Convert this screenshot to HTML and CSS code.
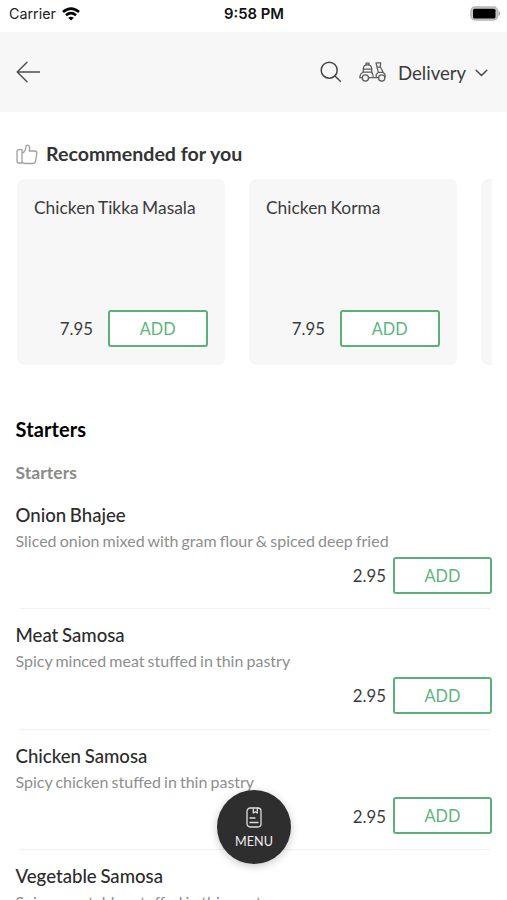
FILE: index.html
```html
<!DOCTYPE html>
<html lang="en">
<head>
<meta charset="utf-8">
<title>Menu</title>
<link rel="stylesheet" href="styles.css">
</head>
<body>
<div class="status">
  <div class="carrier"><span>Carrier</span>
    <svg width="18" height="14" viewBox="0 0 18 14" fill="none" stroke="#000" stroke-width="2.7"><path d="M1 5Q9-1.8 17 5M4 8.2Q9 4.2 14 8.2"/><path d="M9 13.6 6.2 10.8Q9 8.6 11.8 10.8Z" fill="#000" stroke="none"/></svg>
  </div>
  <div class="time">9:58 PM</div>
  <svg class="battery" width="31" height="15" viewBox="0 0 31 15"><rect x="1" y="1" width="26.5" height="13" rx="4" fill="#ccc" stroke="#b5b5b5" stroke-width="1.5"/><rect x="3" y="2.7" width="22.5" height="9.8" rx="1.5" fill="#000"/><path d="M28.5 5Q30.3 5.8 30.3 7.5T28.5 10Z" fill="#aaa"/></svg>
</div>
<header class="bar">
  <svg class="back" width="25" height="22" viewBox="0 0 25 22" fill="none" stroke="#4c4c4c" stroke-width="1.4" stroke-linecap="round" stroke-linejoin="round"><path d="M23.5 11H1.2M11 1.2 1.2 11 11 20.8"/></svg>
  <svg class="search" width="22" height="22" viewBox="0 0 22 22" fill="none" stroke="#484848" stroke-width="1.5" stroke-linecap="round"><circle cx="9.2" cy="9.2" r="8"/><path d="m15 15 5.3 5.2"/></svg>
  <svg class="scooter" width="28" height="20" viewBox="0 0 28 20" fill="none" stroke="#5c5c5c" stroke-width="1.25" stroke-linecap="round" stroke-linejoin="round"><path d="M4.3 10V6.5Q4.5 2.8 8.5 2.8T12.7 6.5V10ZM4.3 7H12.7M7 2.8V1.2H10V2.8"/><path d="M4.3 10Q.9 11.8.8 15.7H3.2M12.7 10Q14.3 12 14.2 15.7M9.6 15.7H19.4M17.2 15.5V12.6L19.3 10.3 18 5.2 17 .8H21.7L21.2 4.8 24.2 10.2Q26.5 12 26.3 14.8M18 5H21.2M19.3 10.3 24.2 10.2"/><circle cx="6.4" cy="15.9" r="3.1"/><circle cx="22.7" cy="15.9" r="3.1"/></svg>
  <span class="mode">Delivery</span>
  <svg class="chev" width="13" height="8" viewBox="0 0 13 8" fill="none" stroke="#484848" stroke-width="1.5" stroke-linecap="round" stroke-linejoin="round"><path d="m1.2 1.2 5.3 5.3 5.3-5.3"/></svg>
</header>
<main>
  <h2 class="rec"><svg width="22" height="21" viewBox="0 0 22 21" fill="none" stroke="#a0a0a0" stroke-width="1.3" stroke-linejoin="round" stroke-linecap="round"><path d="M6 5.7H2.6Q1 5.7 1 7.5V17Q1 19 2.6 19H6M6 5.7V17.8M6 9.2Q9.6 7.8 10 2.6Q10.2 1 11.7 1.2Q14.6 1.8 13.3 7H18.8Q21 7.3 20.8 9.6L19.5 17.3Q19 19.5 16.8 19.5H9.5Q6.5 19.5 6 17.5"/></svg><span>Recommended for you</span></h2>
  <div class="cards">
    <article class="card"><h3>Chicken Tikka Masala</h3><div class="buy"><span class="price">7.95</span><button>ADD</button></div></article>
    <article class="card"><h3>Chicken Korma</h3><div class="buy"><span class="price">7.95</span><button>ADD</button></div></article>
    <article class="card"></article>
  </div>
  <h1>Starters</h1>
  <h2 class="sub">Starters</h2>
  <section class="items">
    <article class="item"><h3>Onion Bhajee</h3><p>Sliced onion mixed with gram flour &amp; spiced deep fried</p><div class="buy"><span class="price">2.95</span><button>ADD</button></div></article>
    <article class="item"><h3>Meat Samosa</h3><p>Spicy minced meat stuffed in thin pastry</p><div class="buy"><span class="price">2.95</span><button>ADD</button></div></article>
    <article class="item"><h3>Chicken Samosa</h3><p>Spicy chicken stuffed in thin pastry</p><div class="buy"><span class="price">2.95</span><button>ADD</button></div></article>
    <article class="item"><h3>Vegetable Samosa</h3><p>Spicy vegetables stuffed in thin pastry</p></article>
  </section>
</main>
<div class="fab">
  <svg width="16" height="21" viewBox="0 0 16 21" fill="none" stroke="#ddd" stroke-width="1.3" stroke-linecap="round" stroke-linejoin="round"><rect x="1" y="1" width="14" height="19" rx="3.2"/><path d="M7.3 1V6L9.3 4.7 11.3 6V1M4 11H9M4 15.5H12"/></svg>
  <span>MENU</span>
</div>
</body>
</html>
```
FILE: styles.css
```css
* { box-sizing: border-box; margin: 0; }
body { width: 507px; height: 900px; overflow: hidden; background: #fff; color: #3c3c3c; font-family: Lato, sans-serif; }
svg { display: block; flex: none; }
.status { height: 32px; display: grid; grid-template-columns: 1fr auto 1fr; align-items: center; padding: 0 6px 5px 9px; font: 15px/20px Inter, sans-serif; color: #222; }
.carrier { display: flex; align-items: center; gap: 6px; font-size: 14.3px; }
.time { margin-right: 2px; font-weight: 600; color: #111; font-size: 14.8px; }
.battery { justify-self: end; }
.bar { height: 79.5px; background: #f7f7f7; display: flex; align-items: center; padding: 0 19px 0 16px; }
.search { margin-left: auto; }
.scooter { margin-left: 17px; }
.mode { margin: 2px 0 0 11px; width: 69px; font-size: 18.6px; line-height: 24px; white-space: nowrap; }
.chev { margin: 3px 0 0 8px; }
main { height: 788px; overflow: hidden; padding: 30px 15px 0; }
.rec { display: flex; align-items: center; gap: 8px; height: 26px; padding-left: 1px; font-size: 19.6px; font-weight: 700; color: #333; white-space: nowrap; }
.rec span { margin-top: -2px; }
.cards { display: flex; gap: 24.5px; margin-top: 11.5px; padding-left: 2px; overflow: hidden; }
.card { flex: 0 0 207.5px; height: 186px; border-radius: 7px; background: #f7f7f7; padding: 17px 17px 18px 17px; display: flex; flex-direction: column; justify-content: space-between; }
.card h3 { font-size: 17.4px; line-height: 24px; font-weight: 400; word-spacing: -1px; white-space: nowrap; }
.buy { display: flex; justify-content: flex-end; align-items: center; gap: 15px; }
.price { font-size: 16.8px; line-height: 24px; }
button { width: 99.5px; height: 37px; padding: 1px 0 0; border: 2px solid #5bb079; border-radius: 3px; background: #fff; color: #5bb57c; font: 16.3px/24px Lato, sans-serif; }
h1 { margin-top: 50.5px; padding-left: .5px; font-size: 20px; line-height: 26px; font-weight: 700; letter-spacing: .1px; color: #000; }
.sub { margin-top: 19.5px; padding-left: .5px; font-size: 17.5px; line-height: 24px; font-weight: 700; letter-spacing: .05px; color: #8a8a8a; }
.items { padding-top: 4px; }
.item { height: 120.3px; padding-top: 14px; background: linear-gradient(#f1f1f1, #f1f1f1) 5px 100% / 470px 1px no-repeat; }
.item h3 { padding-left: .5px; font-size: 18.6px; line-height: 24px; font-weight: 500; word-spacing: -1px; color: #2c2c2c; }
.item p { padding-left: .5px; margin-top: 4px; font-size: 16px; line-height: 20px; word-spacing: -1px; color: #8e8e8e; white-space: nowrap; }
.item .buy { margin-top: 5.5px; gap: 7px; }
.item .price { margin-top: 2px; }
.item button { width: 99px; }
.fab { position: absolute; left: 217px; top: 790px; width: 74px; height: 74px; border-radius: 50%; background: #2e2e2e; box-shadow: 0 2px 8px rgba(0,0,0,.22); display: flex; flex-direction: column; align-items: center; padding-top: 17px; gap: 5px; color: #eee; font-size: 12.6px; line-height: 18px; }
```
